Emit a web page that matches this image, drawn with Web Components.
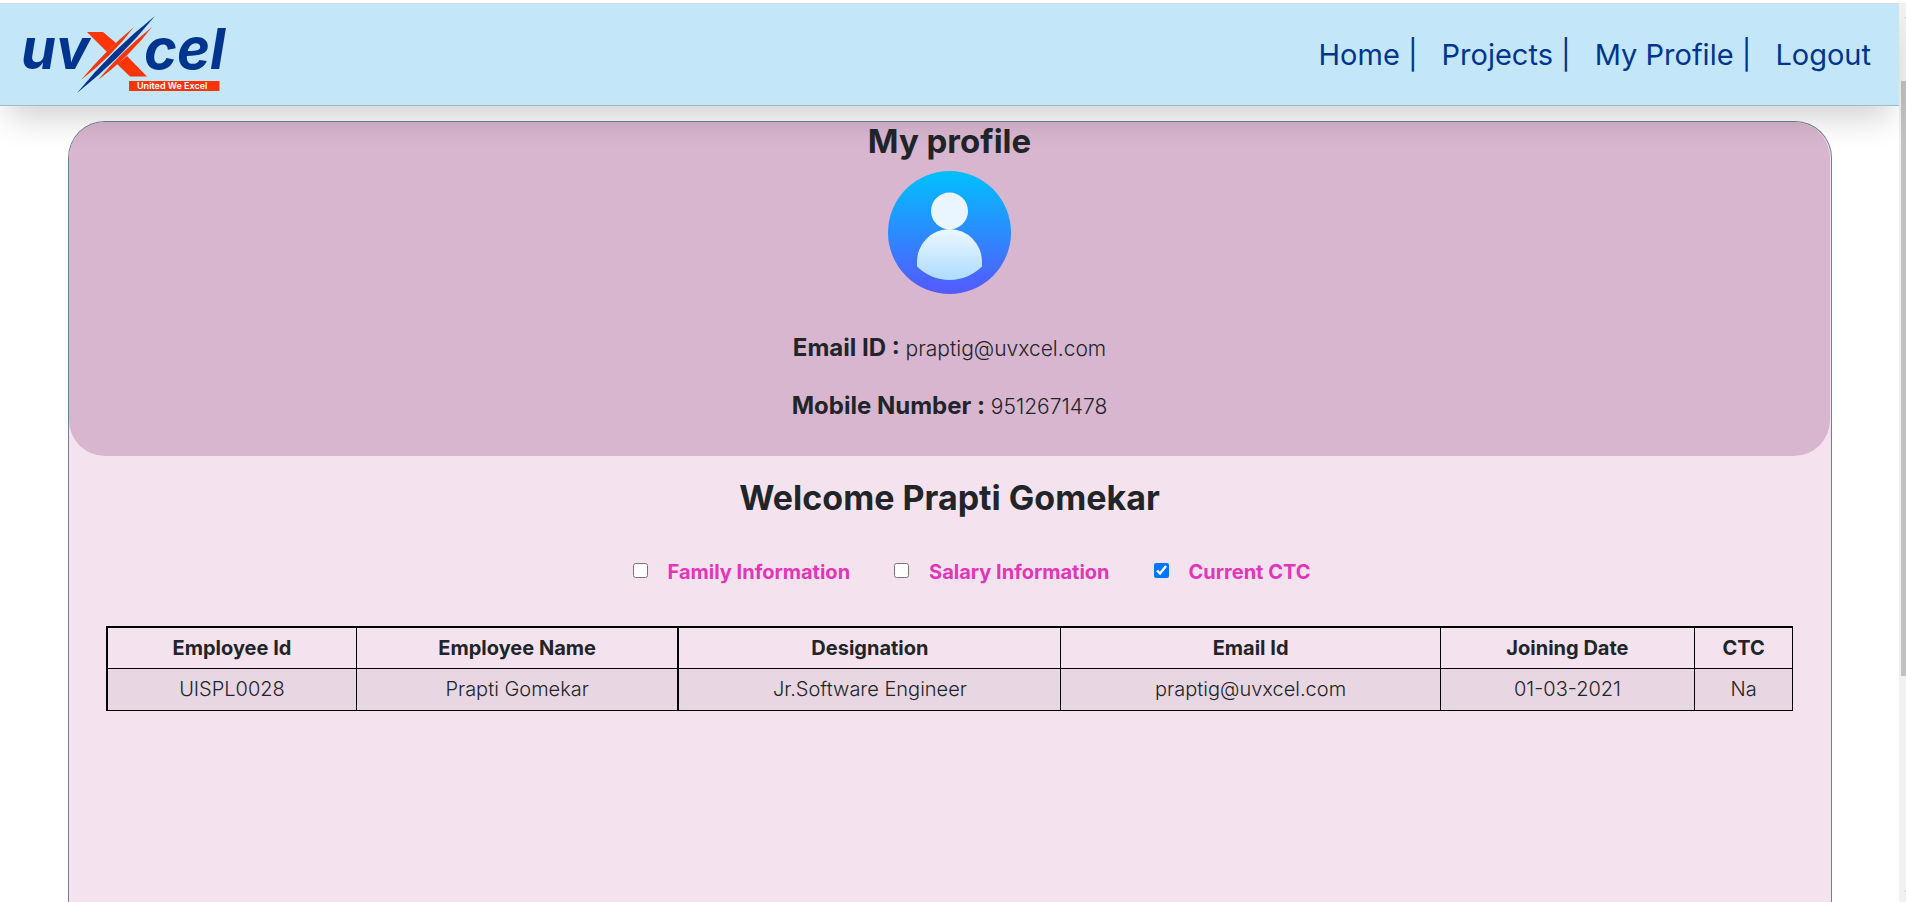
<!DOCTYPE html>
<html lang="en">
<head>
<meta charset="utf-8">
<title>My profile</title>
<style>
  body { margin: 0; font-family: Inter, "Open Sans", sans-serif; color: #212529; background: #fff; }
</style>
</head>
<body>
<profile-app></profile-app>

<script>
const define = (name, html) => {
  const template = document.createElement('template');
  template.innerHTML = html;
  customElements.define(name, class extends HTMLElement {
    constructor() {
      super();
      this.attachShadow({ mode: 'open' }).append(template.content.cloneNode(true));
    }
  });
};

define('brand-logo', `
  <style>
    :host { display: block; width: 208px; height: 80px; }
    svg { display: block; }
    .word { font: italic 700 56px Inter, sans-serif; fill: #00358f; }
    .tag { font: 600 9px Inter, sans-serif; fill: #fff; }
  </style>
  <svg width="208" height="80" viewBox="21 15 208 80" role="img" aria-label="uvXcel, United We Excel">
    <text class="word" x="21" y="69">uv</text>
    <text class="word" x="144" y="69">cel</text>
    <path fill="#c3e6f9" d="M77 93L84 73L130 27L155 16L150 32L100 82z"/>
    <path fill="#fb3507" d="M87 32h16l13 11-9 9zM127 56l20 20.500h-17l-13-12.500z"/>
    <path fill="#fb3507" d="M81 80Q104 52 134 27Q112 56 81 80zM98 80Q121 52 152 27Q130 56 98 80z"/>
    <path fill="#00358f" d="M77 93Q112 50 155 16Q120 59 77 93z"/>
    <path fill="#fb3507" d="M129 81h90.500v10h-90.500z"/>
    <text class="tag" x="137" y="89">United We Excel</text>
  </svg>`);

define('user-avatar', `
  <style>
    :host { display: block; width: 123px; height: 123px; }
    svg { display: block; }
  </style>
  <svg width="123" height="123" viewBox="0 0 123 123" role="img" aria-label="Profile picture">
    <defs>
      <linearGradient id="disc" x1="0" y1="0" x2="0" y2="1"><stop offset="0" stop-color="#00c0ff"/><stop offset="1" stop-color="#5558ff"/></linearGradient>
      <linearGradient id="body" x1="0" y1="0" x2="0" y2="1"><stop offset="0" stop-color="#ecf7ff"/><stop offset="1" stop-color="#addcff"/></linearGradient>
    </defs>
    <circle cx="61.500" cy="61.500" r="61.500" fill="url(#disc)"/>
    <circle cx="61.500" cy="40" r="18.500" fill="#e9f6ff"/>
    <path fill="url(#body)" d="M29 91a32.500 33 0 0 1 65 0v4.500C85 104 74 109 61.500 109S38 104 29 95.500z"/>
  </svg>`);

define('nav-link', `
  <style>
    :host { display: block; }
    a { color: #00358f; text-decoration: none; font-size: 29px; line-height: 42px; white-space: nowrap; }
  </style>
  <a href="#"><slot></slot></a>`);

define('site-header', `
  <style>
    :host { display: flex; align-items: center; justify-content: space-between; position: relative; z-index: 1;
      box-sizing: border-box; height: 103px; padding: 0 28px 0 21px; background: #c3e6f9;
      border-top: 1px solid #d9d9d9; border-bottom: 1px solid #9dbccb;
      box-shadow: 0 20px 32px -8px rgba(0,0,0,.18); }
    nav { display: flex; gap: 24px; }
  </style>
  <brand-logo></brand-logo>
  <nav>
    <nav-link>Home |</nav-link>
    <nav-link>Projects |</nav-link>
    <nav-link>My Profile |</nav-link>
    <nav-link>Logout</nav-link>
  </nav>`);

define('contact-line', `
  <style>
    :host { display: block; font-size: 21px; line-height: 33px; font-weight: 300; }
    b { font-size: 24px; font-weight: 700; }
  </style>
  <b><slot name="label"></slot></b> <slot></slot>`);

define('profile-summary', `
  <style>
    :host { display: flex; flex-direction: column; align-items: center; box-sizing: border-box;
      min-height: 334px; border-radius: 36px; background: #d8b6cf; }
    h2 { margin: 0 0 11px; font-size: 33px; line-height: 38px; font-weight: 700; }
    .contact { display: grid; gap: 24px; margin-top: 37px; justify-items: center; }
  </style>
  <h2>My profile</h2>
  <user-avatar></user-avatar>
  <div class="contact">
    <contact-line><span slot="label">Email ID :</span>praptig@uvxcel.com</contact-line>
    <contact-line><span slot="label">Mobile Number :</span>9512671478</contact-line>
  </div>`);

define('section-toggles', `
  <style>
    :host { display: flex; justify-content: center; gap: 44px; padding-left: 44px; }
    label { display: flex; align-items: center; gap: 20px; color: #e335b9; font-size: 20px; line-height: 27px; font-weight: 700; }
    input { width: 15px; height: 15px; margin: 0 0 4px; }
  </style>
  <label><input type="checkbox">Family Information</label>
  <label><input type="checkbox">Salary Information</label>
  <label><input type="checkbox" checked>Current CTC</label>`);

define('employee-table', `
  <style>
    :host { display: block; }
    table { width: 100%; table-layout: fixed; border-collapse: collapse; text-align: center; font-size: 20px; line-height: 25px;
      border: 1px solid #000; border-top-width: 2px; border-left-width: 2px; }
    th, td { padding: 8px; border: 1px solid #000; }
    th { line-height: 24px; font-weight: 700; border-top-width: 2px; }
    td { font-weight: 300; background: #e8d6e2; }
    th:first-child, td:first-child, th:nth-child(3), td:nth-child(3) { border-left-width: 2px; }
  </style>
  <table>
    <colgroup><col style="width:14.8%"><col style="width:19.1%"><col style="width:22.7%"><col style="width:22.5%"><col style="width:15.1%"><col></colgroup>
    <thead><tr><th>Employee Id</th><th>Employee Name</th><th>Designation</th><th>Email Id</th><th>Joining Date</th><th>CTC</th></tr></thead>
    <tbody><tr><td>UISPL0028</td><td>Prapti Gomekar</td><td>Jr.Software Engineer</td><td>praptig@uvxcel.com</td><td>01-03-2021</td><td>Na</td></tr></tbody>
  </table>`);

define('page-scrollbar', `
  <style>
    :host { display: flex; flex-direction: column; justify-content: space-between; overflow: hidden; background: #f1f1f1; }
    svg { display: block; flex: none; }
    .track { flex: 1; padding: 61px 0 0 2px; }
    .thumb { height: 74%; background: #c1c1c1; }
  </style>
  <svg width="17" height="17" aria-hidden="true"><path d="M6 15l3-3 3 3z" fill="#505050"/></svg>
  <div class="track"><div class="thumb"></div></div>
  <svg width="17" height="17" aria-hidden="true"><path d="M6 6l3 3 3-3z" fill="#505050"/></svg>`);

define('profile-app', `
  <style>
    :host { display: grid; grid-template-columns: minmax(0, 1fr) 7px; box-sizing: border-box; min-height: 100vh; padding-top: 3px; }
    .page { display: flex; flex-direction: column; }
    main { flex: 1; margin: 15px 67px 0 68px; padding-right: 1px; border: 1px solid #708090; border-bottom: 0; border-radius: 37px 37px 0 0; background: #f4e3ee; }
    h2 { margin: 23px 0 42px; text-align: center; font-size: 34px; line-height: 38px; font-weight: 700; }
    employee-table { margin: 40px 37px 0; }
  </style>
  <div class="page">
    <site-header></site-header>
    <main>
      <profile-summary></profile-summary>
      <h2>Welcome Prapti Gomekar</h2>
      <section-toggles></section-toggles>
      <employee-table></employee-table>
    </main>
  </div>
  <page-scrollbar></page-scrollbar>`);
</script>
</body>
</html>
